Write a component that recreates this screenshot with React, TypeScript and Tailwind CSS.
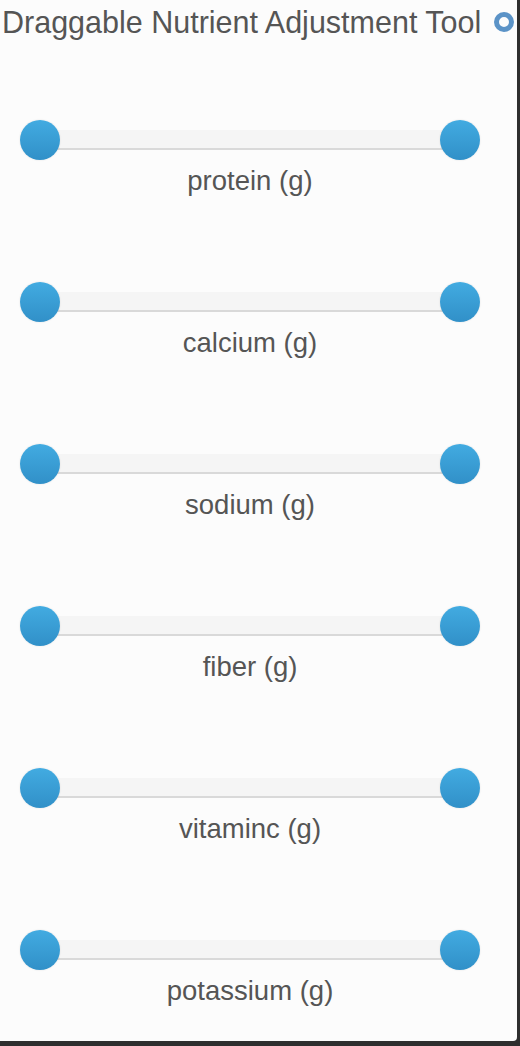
import React from "react";

const nutrients = ["protein (g)", "calcium (g)", "sodium (g)", "fiber (g)", "vitaminc (g)", "potassium (g)"];

function Slider({ label }: { label: string }) {
  return (
    <div className="flex flex-col items-center w-[460px] ml-[20px] h-[162px]">
      <div className="relative w-[460px] h-[40px]">
        <div className="absolute left-[20px] right-[20px] top-[10px] h-[20px] bg-[#f5f5f5] border-b-2 border-[#d9d9d9]" />
        <div className="absolute left-0 top-0 w-[40px] h-[40px] rounded-full bg-gradient-to-b from-[#42abe1] to-[#3190c8] shadow-[0_0_2px_rgba(0,0,0,0.12)]" />
        <div className="absolute right-0 top-0 w-[40px] h-[40px] rounded-full bg-gradient-to-b from-[#42abe1] to-[#3190c8] shadow-[0_0_2px_rgba(0,0,0,0.12)]" />
      </div>
      <div className="mt-[5px] text-[27.5px] leading-[32px] text-[#555555] whitespace-nowrap">{label}</div>
    </div>
  );
}

export default function App() {
  return (
    <div className="w-[520px] h-[1046px] bg-[#2e2e2e] overflow-hidden">
      <div className="w-[517px] h-[1041px] bg-[#fcfcfc] rounded-br-[4px] flex flex-col font-['Liberation_Sans',Arial,sans-serif]">
        <div className="flex items-center h-[44px] pl-[2px]">
          <span className="text-[30.5px] leading-[44px] text-[#555555] whitespace-nowrap">Draggable Nutrient Adjustment Tool</span>
          <span className="ml-auto mr-[3px] w-[20px] h-[20px] rounded-full border-[5px] border-[#5b93c7]" />
        </div>
        <div className="flex flex-col mt-[76px]">
          {nutrients.map((n) => (
            <Slider key={n} label={n} />
          ))}
        </div>
      </div>
    </div>
  );
}
